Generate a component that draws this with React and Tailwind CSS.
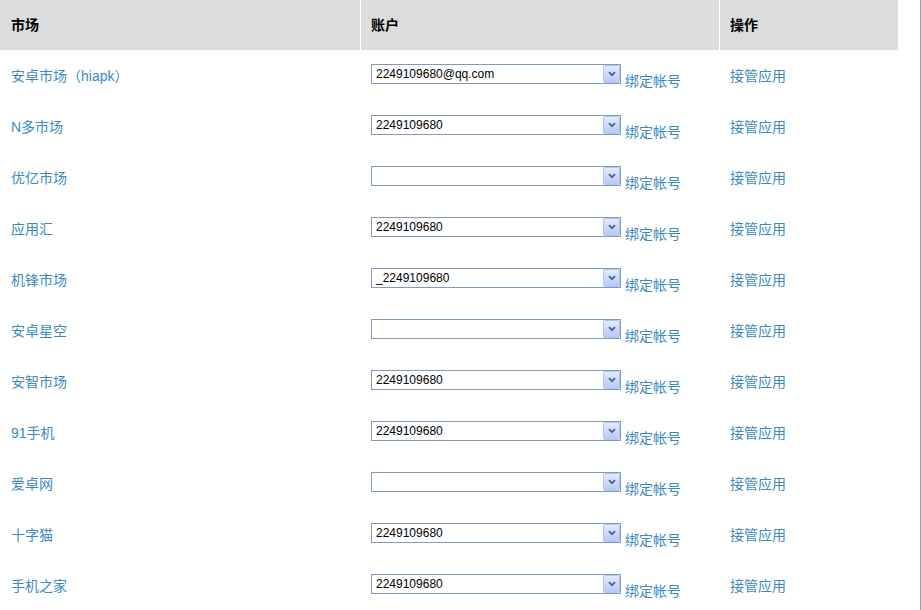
import React from 'react';

const rows = [
  { market: '安卓市场（hiapk）', account: '2249109680@qq.com' },
  { market: 'N多市场', account: '2249109680' },
  { market: '优亿市场', account: '' },
  { market: '应用汇', account: '2249109680' },
  { market: '机锋市场', account: '_2249109680' },
  { market: '安卓星空', account: '' },
  { market: '安智市场', account: '2249109680' },
  { market: '91手机', account: '2249109680' },
  { market: '爱卓网', account: '' },
  { market: '十字猫', account: '2249109680' },
  { market: '手机之家', account: '2249109680' },
];

// XP-style dropdown box
function Select({ value }) {
  return (
    <div className="flex h-[20px] w-[250px] items-center border border-[#7f9db9] bg-white">
      <span className="flex-1 pl-[4px] text-[12px] leading-[18px] text-black">
        {value}
      </span>
      <div className="flex h-[18px] w-[17px] items-center justify-center rounded-[2px] border border-[#b4c6f0] bg-gradient-to-b from-[#e3ebfe] to-[#b6c9f6]">
        <svg width="8" height="6" viewBox="0 0 8 6">
          <path d="M1 1.2 L4 4.2 L7 1.2" fill="none" stroke="#4d6185" strokeWidth="1.8" />
        </svg>
      </div>
    </div>
  );
}

export default function App() {
  return (
    <div className="flex h-[610px] w-[921px] bg-white [font-family:'Liberation_Sans','Noto_Sans_CJK_SC',sans-serif]">
      <div className="w-[898px]">
        {/* header */}
        <div className="flex h-[51px] border-b border-white bg-[#dcdcdc] text-[14px] font-bold text-black">
          <div className="flex w-[361px] items-center border-r border-white pl-[11px]">市场</div>
          <div className="flex w-[359px] items-center border-r border-white pl-[10px]">账户</div>
          <div className="flex flex-1 items-center pl-[10px]">操作</div>
        </div>

        {rows.map((r, i) => (
          <div key={i} className="flex h-[51px] text-[14px] text-[#3b8bbd]">
            <div className="flex w-[361px] items-center pl-[11px]">{r.market}</div>
            <div className="flex w-[359px] items-start pl-[10px] pt-[13px]">
              <Select value={r.account} />
              <span className="ml-[4px] mt-[7px] leading-[20px]">绑定帐号</span>
            </div>
            <div className="flex flex-1 items-center pl-[10px]">接管应用</div>
          </div>
        ))}
      </div>
      <div className="flex-1" />
      <div className="w-[1px] bg-[#7fa8cf]" />
    </div>
  );
}
